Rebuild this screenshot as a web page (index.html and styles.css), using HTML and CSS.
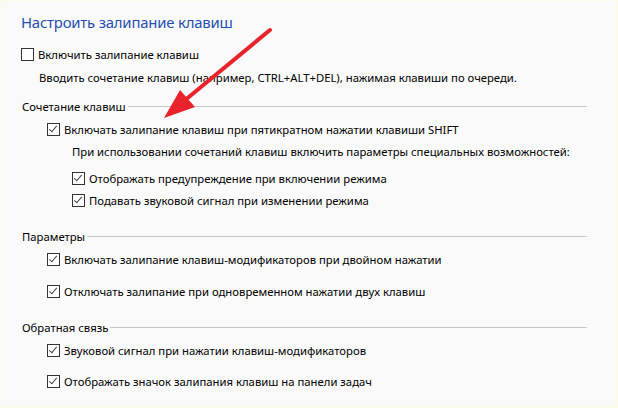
FILE: index.html
```html
<!DOCTYPE html>
<html lang="ru">
<head>
<meta charset="utf-8">
<link rel="stylesheet" href="styles.css">
</head>
<body>
<div class="window">
  <h1 class="title">Настроить залипание клавиш</h1>

  <div class="row row-top lvl0">
    <span class="cb"></span><span class="lbl">Включить залипание клавиш</span>
  </div>
  <div class="text desc">Вводить сочетание клавиш (например, CTRL+ALT+DEL), нажимая клавиши по очереди.</div>

  <div class="section sec-first">
    <div class="sec-head"><span class="sec-label">Сочетание клавиш</span><span class="sec-line"></span></div>
    <div class="row lvl1">
      <span class="cb on"></span><span class="lbl">Включать залипание клавиш при пятикратном нажатии клавиши SHIFT</span>
    </div>
    <div class="text sub">При использовании сочетаний клавиш включить параметры специальных возможностей:</div>
    <div class="row lvl2 gap8">
      <span class="cb on"></span><span class="lbl">Отображать предупреждение при включении режима</span>
    </div>
    <div class="row lvl2 gap3">
      <span class="cb on"></span><span class="lbl">Подавать звуковой сигнал при изменении режима</span>
    </div>
  </div>

  <div class="section">
    <div class="sec-head"><span class="sec-label">Параметры</span><span class="sec-line"></span></div>
    <div class="row lvl1">
      <span class="cb on"></span><span class="lbl">Включать залипание клавиш-модификаторов при двойном нажатии</span>
    </div>
    <div class="row lvl1 gap13">
      <span class="cb on"></span><span class="lbl">Отключать залипание при одновременном нажатии двух клавиш</span>
    </div>
  </div>

  <div class="section">
    <div class="sec-head"><span class="sec-label">Обратная связь</span><span class="sec-line"></span></div>
    <div class="row lvl1">
      <span class="cb on"></span><span class="lbl">Звуковой сигнал при нажатии клавиш-модификаторов</span>
    </div>
    <div class="row lvl1 gap12">
      <span class="cb on"></span><span class="lbl">Отображать значок залипания клавиш на панели задач</span>
    </div>
  </div>

  <svg class="arrow" width="618" height="408" viewBox="0 0 618 408" aria-hidden="true">
    <line x1="270" y1="30" x2="184" y2="101" stroke="#e8232b" stroke-width="4" stroke-linecap="round"/>
    <polygon points="164,118 180,90 195,107" fill="#e8232b"/>
  </svg>
</div>
</body>
</html>
```

FILE: styles.css
```css
html, body {
  margin: 0;
  padding: 0;
}
body {
  background: #fcfbe8;
  font-family: "Noto Sans", "Open Sans", "DejaVu Sans", sans-serif;
  font-size: 11.3px;
  color: #000;
}
.window {
  position: relative;
  margin: 1px 2px 2px 1px;
  height: 405px;
  background: #fafafa;
  padding-left: 20px;
  box-sizing: border-box;
  overflow: hidden;
}
.title {
  margin: 0;
  padding-top: 11px;
  height: 20px;
  line-height: 20px;
  font-size: 14.9px;
  letter-spacing: -0.2px;
  font-weight: normal;
  color: #1f4fb0;
  box-sizing: content-box;
}
.row {
  display: flex;
  align-items: center;
  height: 19px;
  margin-top: 4px;
}
.row-top { margin-top: 13px; }
.lvl1 { padding-left: 26px; }
.lvl2 { padding-left: 51px; }
.gap8 { margin-top: 8px; }
.gap3 { margin-top: 3px; }
.gap13 { margin-top: 13px; }
.gap12 { margin-top: 12px; }
.cb {
  flex: none;
  width: 11px;
  height: 11px;
  border: 1px solid #333;
  background: #fff;
  margin-right: 4px;
  position: relative;
}
.cb.on::after {
  content: "";
  position: absolute;
  left: 3px;
  top: 0px;
  width: 3px;
  height: 7px;
  border-right: 1px solid #444;
  border-bottom: 1px solid #444;
  transform: rotate(40deg);
}
.text {
  height: 19px;
  line-height: 19px;
}
.desc {
  margin-top: 4px;
  padding-left: 18px;
}
.sub {
  margin-top: 3px;
  padding-left: 51px;
}
.section { margin-top: 17px; }
.sec-first { margin-top: 10px; }
.sec-head {
  display: flex;
  align-items: center;
  height: 19px;
  padding-left: 1px;
  width: 565px;
}
.sec-label { flex: none; margin-right: 2px; }
.sec-line {
  flex: 1;
  height: 1px;
  background: #c8c8c8;
}
.arrow {
  position: absolute;
  left: -1px;
  top: -1px;
  pointer-events: none;
}
```
